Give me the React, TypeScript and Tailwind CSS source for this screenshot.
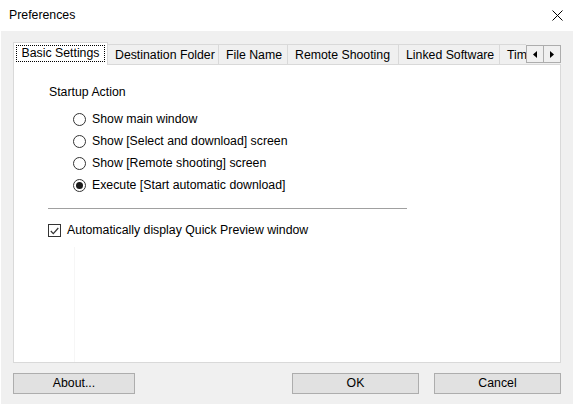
import React from "react";

const OPTIONS = [
  { label: "Show main window", checked: false },
  { label: "Show [Select and download] screen", checked: false },
  { label: "Show [Remote shooting] screen", checked: false },
  { label: "Execute [Start automatic download]", checked: true },
];

const TABS = [
  { label: "Destination Folder", w: "w-[111px]" },
  { label: "File Name", w: "w-[69px]" },
  { label: "Remote Shooting", w: "w-[111px]" },
  { label: "Linked Software", w: "w-[101px]" },
  { label: "Timer Shooting", w: "w-[110px]" },
];

function Radio({ checked }: { checked: boolean }) {
  return (
    <span className="w-[13px] h-[13px] rounded-full border border-[#333] bg-white flex items-center justify-center shrink-0">
      {checked && <span className="w-[7px] h-[7px] rounded-full bg-[#1a1a1a]" />}
    </span>
  );
}

function Button({ label, w }: { label: string; w: string }) {
  return (
    <button
      className={`${w} h-[21px] border border-[#adadad] bg-[#e1e1e1] text-[12.3px] leading-none text-black flex items-center justify-center`}
    >
      {label}
    </button>
  );
}

export default function App() {
  return (
    <div
      className="w-[574px] h-[406px] bg-white text-black text-[12.3px] flex flex-col overflow-hidden"
      style={{ fontFamily: '"Liberation Sans", Arial, sans-serif' }}
    >
      {/* title bar */}
      <div className="h-[31px] flex items-center justify-between pl-[9px] pr-[11px] shrink-0">
        <span className="text-[12.3px] leading-none">Preferences</span>
        <svg width="11" height="11" viewBox="0 0 11 11" className="shrink-0">
          <path d="M0.5 0.5 L10.5 10.5 M10.5 0.5 L0.5 10.5" stroke="#000" strokeWidth="1" />
        </svg>
      </div>

      <div className="flex-1 ml-px mr-px mb-[2px] bg-[#f0f0f0] flex flex-col px-[12px] pt-[12px] pb-[8px]">
        {/* tabs */}
        <div className="h-[22px] flex items-end shrink-0">
          <div className="flex-1 flex items-end overflow-hidden h-[23px]">
            <div className="relative z-10 w-[95px] h-[23px] shrink-0 bg-white border border-b-0 border-[#d9d9d9] pt-[2px] px-[2px] pb-[3px]">
              <div className="h-full border border-dotted border-black flex items-center justify-center leading-none whitespace-nowrap">
                Basic Settings
              </div>
            </div>
            {TABS.map((t) => (
              <div
                key={t.label}
                className={`${t.w} h-[21px] shrink-0 border-t border-r border-[#d9d9d9] bg-[#f0f0f0] flex items-center pl-[7px] leading-none whitespace-nowrap`}
              >
                {t.label}
              </div>
            ))}
          </div>
          <div className="flex shrink-0 mb-[2px]">
            <div className="w-[18px] h-[18px] border border-[#adadad] bg-[#f0f0f0] flex items-center justify-center">
              <svg width="4" height="7" viewBox="0 0 4 7">
                <path d="M4 0 L0 3.5 L4 7 Z" fill="#000" />
              </svg>
            </div>
            <div className="w-[18px] h-[18px] -ml-px border border-[#adadad] bg-[#f0f0f0] flex items-center justify-center">
              <svg width="4" height="7" viewBox="0 0 4 7">
                <path d="M0 0 L4 3.5 L0 7 Z" fill="#000" />
              </svg>
            </div>
          </div>
        </div>

        {/* panel */}
        <div className="h-[299px] -mt-px border border-[#d9d9d9] bg-white flex flex-col pl-[35px] pt-[20px] shrink-0">
          <div className="leading-[14px]">Startup Action</div>
          <div className="flex flex-col pl-[24px] pt-[13px] gap-[8px]">
            {OPTIONS.map((o) => (
              <div key={o.label} className="flex items-center gap-[6px] h-[14px]">
                <Radio checked={o.checked} />
                <span className="leading-none whitespace-nowrap">{o.label}</span>
              </div>
            ))}
          </div>
          <div className="w-[359px] h-px bg-[#a0a0a0] mt-[16px] -ml-px" />
          <div className="flex items-center gap-[6px] mt-[15px] -ml-px">
            <span className="w-[13px] h-[13px] border border-[#333] bg-white flex items-center justify-center shrink-0">
              <svg width="9" height="8" viewBox="0 0 9 8">
                <path d="M0.8 4 L3.3 6.6 L8.3 1" stroke="#333" strokeWidth="1.2" fill="none" />
              </svg>
            </span>
            <span className="leading-none whitespace-nowrap">Automatically display Quick Preview window</span>
          </div>
          <div className="flex-1 ml-[25px] mt-[10px] border-l border-[#f6f6f6]" />
        </div>

        {/* buttons */}
        <div className="flex items-center mt-[10px]">
          <Button label="About..." w="w-[122px]" />
          <div className="flex-1" />
          <Button label="OK" w="w-[127px]" />
          <div className="w-[15px]" />
          <Button label="Cancel" w="w-[127px]" />
        </div>
      </div>
    </div>
  );
}
